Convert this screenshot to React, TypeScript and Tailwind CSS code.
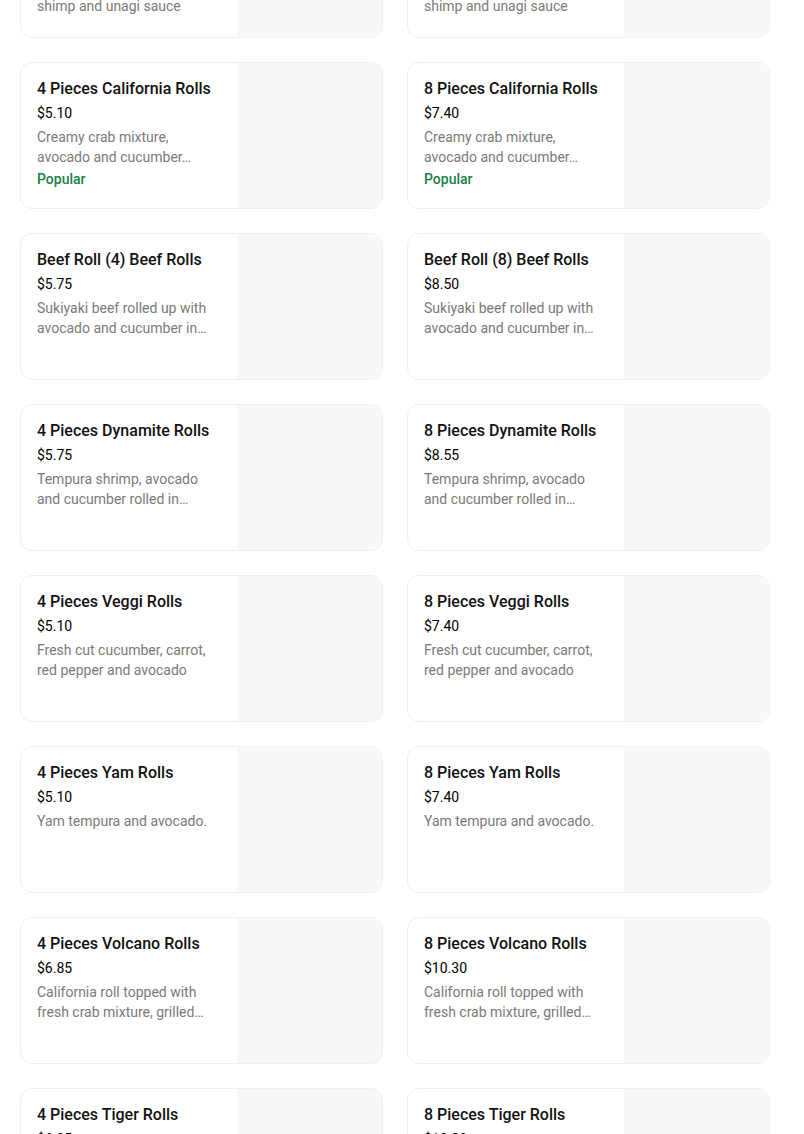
import React from "react";

type Item = { title: string; price: string; desc: string; popular?: boolean };

const rows: [Item, Item][] = [
  [
    { title: "4 Pieces California Rolls", price: "$5.10", desc: "Creamy crab mixture, avocado and cucumber…", popular: true },
    { title: "8 Pieces California Rolls", price: "$7.40", desc: "Creamy crab mixture, avocado and cucumber…", popular: true },
  ],
  [
    { title: "Beef Roll (4) Beef Rolls", price: "$5.75", desc: "Sukiyaki beef rolled up with avocado and cucumber in…" },
    { title: "Beef Roll (8) Beef Rolls", price: "$8.50", desc: "Sukiyaki beef rolled up with avocado and cucumber in…" },
  ],
  [
    { title: "4 Pieces Dynamite Rolls", price: "$5.75", desc: "Tempura shrimp, avocado and cucumber rolled in…" },
    { title: "8 Pieces Dynamite Rolls", price: "$8.55", desc: "Tempura shrimp, avocado and cucumber rolled in…" },
  ],
  [
    { title: "4 Pieces Veggi Rolls", price: "$5.10", desc: "Fresh cut cucumber, carrot, red pepper and avocado" },
    { title: "8 Pieces Veggi Rolls", price: "$7.40", desc: "Fresh cut cucumber, carrot, red pepper and avocado" },
  ],
  [
    { title: "4 Pieces Yam Rolls", price: "$5.10", desc: "Yam tempura and avocado." },
    { title: "8 Pieces Yam Rolls", price: "$7.40", desc: "Yam tempura and avocado." },
  ],
  [
    { title: "4 Pieces Volcano Rolls", price: "$6.85", desc: "California roll topped with fresh crab mixture, grilled…" },
    { title: "8 Pieces Volcano Rolls", price: "$10.30", desc: "California roll topped with fresh crab mixture, grilled…" },
  ],
  [
    { title: "4 Pieces Tiger Rolls", price: "$6.85", desc: "California roll topped with tempura shrimp and spicy…" },
    { title: "8 Pieces Tiger Rolls", price: "$10.30", desc: "California roll topped with tempura shrimp and spicy…" },
  ],
];

function Card({ item }: { item: Item }) {
  return (
    <div className="flex h-[147px] overflow-hidden rounded-xl border border-[#efefef] bg-white">
      <div className="min-w-0 flex-1 pl-4 pr-4 pt-[14px]">
        <div className="whitespace-nowrap text-[16px] font-medium leading-6 text-[#111]">{item.title}</div>
        <div className="mt-[2px] text-[14px] leading-5 text-black">{item.price}</div>
        <div className="mt-1 text-[14px] leading-5 text-[#7a7a7a]">{item.desc}</div>
        {item.popular && (
          <div className="mt-[2px] text-[14px] font-medium leading-5 text-[#1a8048]">Popular</div>
        )}
      </div>
      <div className="h-full w-[145px] shrink-0 bg-[#f8f8f8]" />
    </div>
  );
}

function TopCard() {
  return (
    <div className="flex h-[147px] overflow-hidden rounded-xl border border-[#efefef] bg-white">
      <div className="min-w-0 flex-1 pl-4 pr-4 pt-[14px]">
        <div className="whitespace-nowrap text-[16px] font-medium leading-6 text-[#111]">4 Pieces Dragon Rolls</div>
        <div className="mt-[2px] text-[14px] leading-5 text-black">$6.85</div>
        <div className="mt-1 text-[14px] leading-5 text-[#7a7a7a]">
          <div>California roll topped with</div>
          <div>eel, avocado, tempura</div>
          <div>shimp and unagi sauce</div>
        </div>
      </div>
      <div className="h-full w-[145px] shrink-0 bg-[#f8f8f8]" />
    </div>
  );
}

export default function App() {
  return (
    <div
      className="h-[1134px] overflow-hidden bg-white"
      style={{ fontFamily: "Roboto, 'Noto Sans', sans-serif" }}
    >
      <div className="-mt-[109px] grid w-[770px] grid-cols-2 gap-x-6 gap-y-6 pl-5">
        <TopCard />
        <TopCard />
        {rows.map(([a, b], i) => (
          <React.Fragment key={i}>
            <Card item={a} />
            <Card item={b} />
          </React.Fragment>
        ))}
      </div>
    </div>
  );
}
